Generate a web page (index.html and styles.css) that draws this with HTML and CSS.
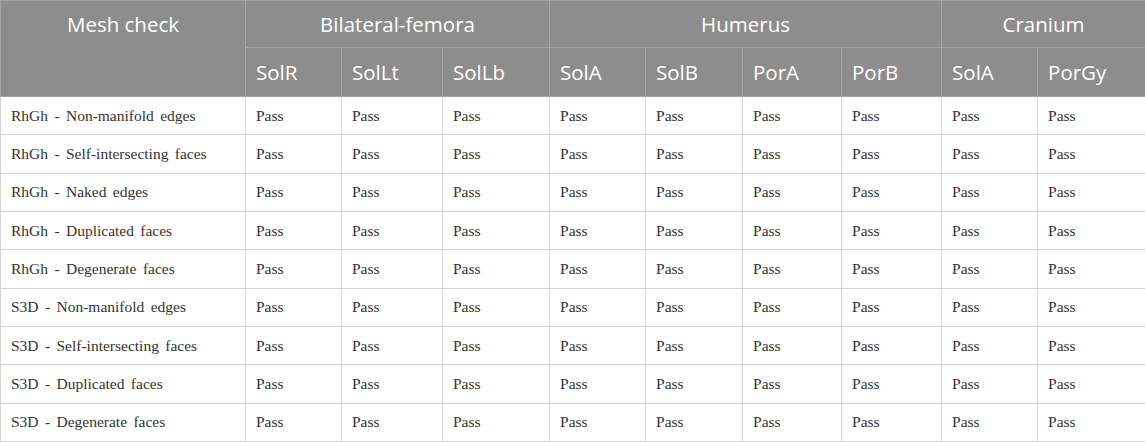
FILE: index.html
```html
<!DOCTYPE html>
<html>
<head>
<meta charset="utf-8">
<link rel="stylesheet" href="styles.css">
</head>
<body>
<table class="mesh">
  <colgroup>
    <col class="c0"><col class="c1"><col class="c2"><col class="c3"><col class="c4"><col class="c5"><col class="c6"><col class="c7"><col class="c8"><col class="c9">
  </colgroup>
  <thead>
    <tr class="h1">
      <th rowspan="2" class="first">Mesh check</th>
      <th colspan="3" class="group">Bilateral-femora</th>
      <th colspan="4" class="group">Humerus</th>
      <th colspan="2" class="group">Cranium</th>
    </tr>
    <tr class="h2">
      <th>SolR</th><th>SolLt</th><th>SolLb</th>
      <th>SolA</th><th>SolB</th><th>PorA</th><th>PorB</th>
      <th>SolA</th><th>PorGy</th>
    </tr>
  </thead>
  <tbody>
    <tr><td>RhGh - Non-manifold edges</td><td>Pass</td><td>Pass</td><td>Pass</td><td>Pass</td><td>Pass</td><td>Pass</td><td>Pass</td><td>Pass</td><td>Pass</td></tr>
    <tr><td>RhGh - Self-intersecting faces</td><td>Pass</td><td>Pass</td><td>Pass</td><td>Pass</td><td>Pass</td><td>Pass</td><td>Pass</td><td>Pass</td><td>Pass</td></tr>
    <tr><td>RhGh - Naked edges</td><td>Pass</td><td>Pass</td><td>Pass</td><td>Pass</td><td>Pass</td><td>Pass</td><td>Pass</td><td>Pass</td><td>Pass</td></tr>
    <tr><td>RhGh - Duplicated faces</td><td>Pass</td><td>Pass</td><td>Pass</td><td>Pass</td><td>Pass</td><td>Pass</td><td>Pass</td><td>Pass</td><td>Pass</td></tr>
    <tr><td>RhGh - Degenerate faces</td><td>Pass</td><td>Pass</td><td>Pass</td><td>Pass</td><td>Pass</td><td>Pass</td><td>Pass</td><td>Pass</td><td>Pass</td></tr>
    <tr><td>S3D - Non-manifold edges</td><td>Pass</td><td>Pass</td><td>Pass</td><td>Pass</td><td>Pass</td><td>Pass</td><td>Pass</td><td>Pass</td><td>Pass</td></tr>
    <tr><td>S3D - Self-intersecting faces</td><td>Pass</td><td>Pass</td><td>Pass</td><td>Pass</td><td>Pass</td><td>Pass</td><td>Pass</td><td>Pass</td><td>Pass</td></tr>
    <tr><td>S3D - Duplicated faces</td><td>Pass</td><td>Pass</td><td>Pass</td><td>Pass</td><td>Pass</td><td>Pass</td><td>Pass</td><td>Pass</td><td>Pass</td></tr>
    <tr><td>S3D - Degenerate faces</td><td>Pass</td><td>Pass</td><td>Pass</td><td>Pass</td><td>Pass</td><td>Pass</td><td>Pass</td><td>Pass</td><td>Pass</td></tr>
  </tbody>
</table>
</body>
</html>
```

FILE: styles.css
```css
html, body {
  margin: 0;
  padding: 0;
  background: #ffffff;
}

.mesh {
  width: 1145px;
  border-collapse: collapse;
  table-layout: fixed;
}

.c0 { width: 245px; }
.c1 { width: 96px; }
.c2 { width: 101px; }
.c3 { width: 107px; }
.c4 { width: 96px; }
.c5 { width: 97px; }
.c6 { width: 99px; }
.c7 { width: 100px; }
.c8 { width: 96px; }
.c9 { width: 108px; }

.mesh th {
  background: #8d8d8d;
  color: #ffffff;
  font-family: "Open Sans", "Noto Sans", sans-serif;
  font-weight: 400;
  font-size: 20.5px;
  border: 1px solid #a3a3a3;
  padding: 0 0 0 10px;
  text-align: left;
  white-space: nowrap;
}

.mesh .h1 { height: 47px; }
.mesh .h2 { height: 49px; }

.mesh th.group {
  text-align: center;
  padding: 0;
}

.mesh th.first {
  text-align: center;
  vertical-align: top;
  padding: 9px 0 0 0;
}

.mesh td {
  font-family: "Liberation Serif", "Times New Roman", serif;
  font-size: 15.5px;
  color: #333333;
  border: 1px solid #d4d4d4;
  padding: 0 0 0 10px;
  height: 37.35px;
  white-space: nowrap;
  word-spacing: 2.5px;
}
```
